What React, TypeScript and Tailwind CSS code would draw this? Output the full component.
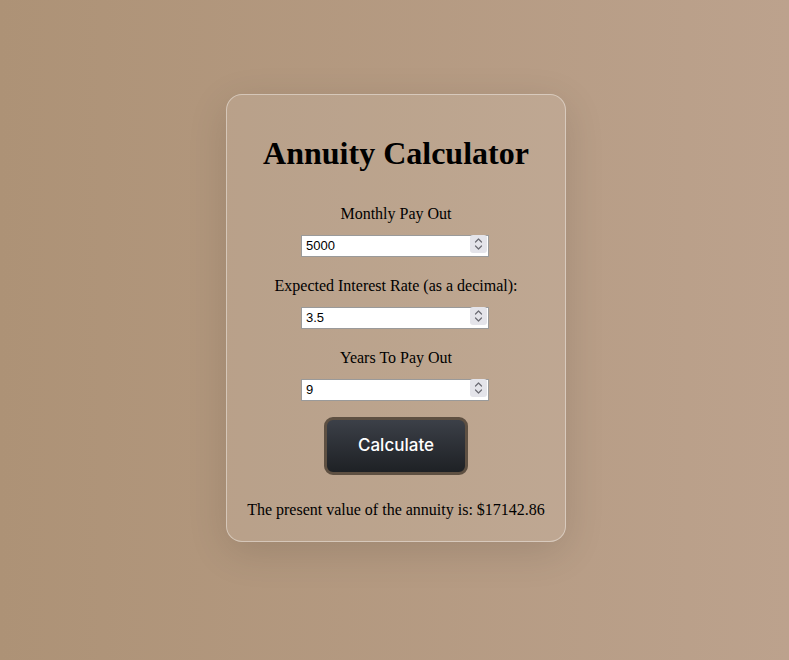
import { useState } from "react";

function SpinBox() {
  return (
    <div className="absolute right-[2px] top-[2px] bottom-[2px] w-[17px] rounded-[3px] bg-[#e4e4ea] flex flex-col items-center justify-center">
      <svg width="9" height="14" viewBox="0 0 9 14" fill="none" stroke="#6b6b73" strokeWidth="1.2" strokeLinecap="round" strokeLinejoin="round">
        <path d="M1.5 5 L4.5 2 L7.5 5" />
        <path d="M1.5 9 L4.5 12 L7.5 9" />
      </svg>
    </div>
  );
}

function Field({ label, value, onChange }: { label: string; value: string; onChange: (v: string) => void }) {
  return (
    <div className="flex flex-col items-center">
      <label className="text-base leading-[20px]">{label}</label>
      <div className="relative mt-[9px] w-[188px] h-[22px] -translate-x-[1px]">
        <input
          type="text"
          value={value}
          onChange={(e) => onChange(e.target.value)}
          className="w-full h-full border border-[#9a9a9a] bg-white pl-[4px] pr-6 text-[13px] text-black focus:outline-none"
          style={{ fontFamily: '"Liberation Sans", Arial, sans-serif' }}
        />
        <SpinBox />
      </div>
    </div>
  );
}

export default function App() {
  const [payout, setPayout] = useState("5000");
  const [rate, setRate] = useState("3.5");
  const [years, setYears] = useState("9");

  return (
    <div
      className="min-h-[660px] w-full bg-gradient-to-r from-[#ad9276] to-[#bca28d] flex justify-center pt-[94px] text-black"
      style={{ fontFamily: '"Liberation Serif", "Times New Roman", serif' }}
    >
      <div className="w-[340px] h-[448px] ml-[3px] rounded-2xl border border-white/40 bg-white/10 shadow-[0_10px_40px_rgba(0,0,0,0.12)] flex flex-col items-center pt-[40px]">
        <h1 className="text-[32px] font-bold leading-[37px]">Annuity Calculator</h1>

        <div className="mt-[32px] flex flex-col gap-[21px]">
          <Field label="Monthly Pay Out" value={payout} onChange={setPayout} />
          <Field label="Expected Interest Rate (as a decimal):" value={rate} onChange={setRate} />
          <Field label="Years To Pay Out" value={years} onChange={setYears} />
        </div>

        <button
          type="button"
          className="mt-[18px] w-[144px] h-[58px] rounded-[9px] border-[3px] border-[#5e5042] bg-gradient-to-b from-[#3c4048] to-[#1e2125] text-white text-[17px] font-medium"
          style={{ fontFamily: "Inter, sans-serif" }}
        >
          Calculate
        </button>

        <p className="mt-[25px] text-base leading-[20px]">The present value of the annuity is: $17142.86</p>
      </div>
    </div>
  );
}
